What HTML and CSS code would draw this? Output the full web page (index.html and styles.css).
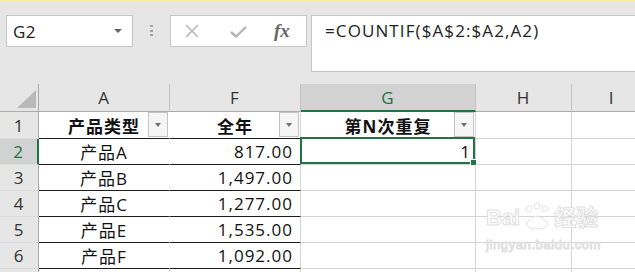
FILE: index.html
```html
<!DOCTYPE html>
<html lang="zh-CN">
<head>
  <meta charset="UTF-8" />
  <title>COUNTIF 第N次重复</title>
  <link rel="stylesheet" href="styles.css">
</head>
<body>
  <div class="toolbar">
    <div class="namebox"><span>G2</span><span class="caret"></span></div>
    <div class="grip"><i></i><i></i><i></i></div>
    <div class="fbtns">
      <svg class="ic-x" width="14" height="14" viewBox="0 0 14 14"><path d="M1 1L13 13M13 1L1 13" stroke="#b5b5b5" stroke-width="1.6" fill="none"/></svg>
      <svg class="ic-ok" width="17" height="12" viewBox="0 0 17 12"><path d="M1 6L6 10.5L16 1" stroke="#b5b5b5" stroke-width="2.4" fill="none"/></svg>
      <span class="fx">fx</span>
    </div>
    <div class="formula">=COUNTIF($A$2:$A2,A2)</div>
  </div>

  <div class="sheet">
    <div class="c corner"><span class="tri"></span></div>
    <div class="c colhead">A</div>
    <div class="c colhead">F</div>
    <div class="c colhead on">G</div>
    <div class="c colhead">H</div>
    <div class="c colhead">I</div>

    <div class="c rowhead">1</div>
    <div class="c t ta hd">产品类型<span class="filter"></span></div>
    <div class="c t hd">全年<span class="filter"></span></div>
    <div class="c hd">第N次重复<span class="filter"></span></div>
    <div class="c"></div>
    <div class="c"></div>

    <div class="c rowhead on">2</div>
    <div class="c t ta">产品A</div>
    <div class="c t num">817.00</div>
    <div class="c num sel-cell">1<span class="sel"><span class="handle"></span></span></div>
    <div class="c"></div>
    <div class="c"></div>

    <div class="c rowhead">3</div>
    <div class="c t ta">产品B</div>
    <div class="c t num">1,497.00</div>
    <div class="c"></div>
    <div class="c"></div>
    <div class="c"></div>

    <div class="c rowhead">4</div>
    <div class="c t ta">产品C</div>
    <div class="c t num">1,277.00</div>
    <div class="c"></div>
    <div class="c"></div>
    <div class="c"></div>

    <div class="c rowhead">5</div>
    <div class="c t ta">产品E</div>
    <div class="c t num">1,535.00</div>
    <div class="c"></div>
    <div class="c"></div>
    <div class="c"></div>

    <div class="c rowhead">6</div>
    <div class="c t ta">产品F</div>
    <div class="c t num">1,092.00</div>
    <div class="c"></div>
    <div class="c"></div>
    <div class="c"></div>

    <div class="c rowhead"></div>
    <div class="c"></div>
    <div class="c"></div>
    <div class="c"></div>
    <div class="c"></div>
    <div class="c"></div>
  </div>

  <div class="watermark">
    <div class="wm-top">Bai<svg width="30" height="30" viewBox="0 0 30 30"><g fill="none" stroke="#e2e2e2"><circle cx="7" cy="7" r="3"/><circle cx="15" cy="4" r="3"/><circle cx="23" cy="7" r="3"/><path d="M5 20 Q15 8 25 20 Q27 27 15 27 Q3 27 5 20Z"/></g></svg>经验</div>
    <div class="wm-url">jingyan.baidu.com</div>
  </div>
</body>
</html>
```

FILE: styles.css
```css
body {
  margin: 0;
  font-family: "Open Sans", "Noto Sans CJK SC", sans-serif;
  background: #fff;
  color: #111;
  overflow: hidden;
}

/* formula bar */
.toolbar {
  display: flex;
  align-items: flex-start;
  height: 84px;
  box-sizing: border-box;
  border-top: 2px solid #f3eda8;
  background: #e6e6e6;
  padding: 13px 0 0 6px;
}
.namebox {
  width: 127px;
  height: 32px;
  box-sizing: border-box;
  border: 1px solid #c6c6c6;
  background: #fff;
  display: flex;
  align-items: center;
  justify-content: space-between;
  padding: 0 10px 0 6px;
  font-size: 17px;
  letter-spacing: 0.5px;
  color: #222;
}
.caret {
  border-left: 4px solid transparent;
  border-right: 4px solid transparent;
  border-top: 4px solid #666;
}
.grip {
  width: 37px;
  display: flex;
  flex-direction: column;
  align-items: center;
  gap: 2.5px;
  padding-top: 10px;
}
.grip i {
  width: 3px;
  height: 2px;
  background: #a3a3a3;
}
.fbtns {
  width: 137px;
  height: 32px;
  box-sizing: border-box;
  border: 1px solid #c6c6c6;
  background: #fff;
  display: flex;
  align-items: center;
}
.ic-x { margin-left: 14px; }
.ic-ok { margin-left: 31px; margin-top: 2px; }
.fx {
  margin-left: 27px;
  font-family: "Liberation Serif", serif;
  font-style: italic;
  font-weight: 700;
  font-size: 19px;
  color: #666;
}
.formula {
  margin-left: 4px;
  flex: 1;
  height: 57px;
  box-sizing: border-box;
  border: 1px solid #c6c6c6;
  border-right: none;
  background: #fff;
  padding: 4px 0 0 13px;
  font-size: 17px;
  line-height: 22px;
  letter-spacing: 1.1px;
  color: #222;
}

/* grid */
.sheet {
  display: grid;
  grid-template-columns: 39px 131px 131px 175px 96px 80px;
  grid-template-rows: 28px 27px repeat(6, 26px);
  width: 652px;
}
.c {
  box-sizing: border-box;
  border-right: 1px solid #d4d4d4;
  border-bottom: 1px solid #d4d4d4;
  font-size: 17px;
  letter-spacing: 1px;
  display: flex;
  align-items: center;
  justify-content: center;
  position: relative;
  white-space: nowrap;
}
.colhead {
  background: #e6e6e6;
  border-right-color: #c4c4c4;
  border-bottom-color: #ababab;
  color: #333;
}
.colhead.on {
  background: #d2d2d2;
  color: #217346;
  border-bottom: 2px solid #217346;
}
.corner {
  background: #e6e6e6;
  border-right-color: #ababab;
  border-bottom-color: #ababab;
}
.tri {
  position: absolute;
  right: 2px;
  bottom: 3px;
  border-left: 19px solid transparent;
  border-bottom: 18px solid #b9b9b9;
}
.rowhead {
  background: #e6e6e6;
  border-right-color: #ababab;
  border-bottom-color: #dcdcdc;
  color: #333;
}
.rowhead.on {
  background: #d2d2d2;
  color: #217346;
  border-right: 2px solid #217346;
}
.t { border-bottom-color: #1c1c1c; }
.ta { border-right-color: #fff; }
.hd { font-weight: 700; }
.num {
  justify-content: flex-end;
  padding-right: 7px;
}
.sel-cell { padding-right: 4px; }

.filter {
  position: absolute;
  right: 1px;
  top: 0;
  width: 20px;
  height: 25px;
  box-sizing: border-box;
  border: 1px solid #c4c4c4;
  background: #f5f5f5;
}
.filter::after {
  content: "";
  position: absolute;
  left: 6px;
  top: 10px;
  border-left: 3.5px solid transparent;
  border-right: 3.5px solid transparent;
  border-top: 4px solid #707070;
}

.sel {
  position: absolute;
  left: -1px;
  top: -2px;
  right: 0;
  bottom: 0;
  border: 2px solid #217346;
  z-index: 2;
}
.handle {
  position: absolute;
  right: -4px;
  bottom: -4px;
  width: 5px;
  height: 5px;
  background: #217346;
  border: 1px solid #fff;
}

/* watermark */
.watermark {
  position: absolute;
  left: 486px;
  top: 200px;
  color: #fff;
  -webkit-text-stroke: 1px #e0e0e0;
  font-family: "Liberation Sans", "Noto Sans CJK SC", sans-serif;
}
.wm-top {
  display: flex;
  align-items: flex-end;
  font-size: 22px;
  font-weight: 700;
  line-height: 36px;
}
.wm-top svg { margin: 0 2px 4px; }
.wm-url {
  font-size: 13px;
  letter-spacing: 0.6px;
  line-height: 14px;
  margin-top: 2px;
}
```
